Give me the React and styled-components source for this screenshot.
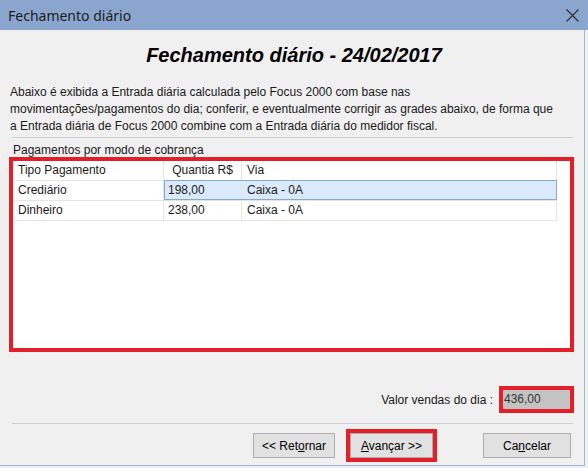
import React from 'react';
import styled, { createGlobalStyle } from 'styled-components';

const GlobalStyle = createGlobalStyle`
  html, body {
    margin: 0;
    padding: 0;
    background: #f0f0f0;
  }
  body {
    font-family: "Liberation Sans", Arial, sans-serif;
    font-size: 12px;
    color: #1a1a1a;
  }
`;

const Window = styled.div`
  width: 588px;
  height: 468px;
  box-sizing: border-box;
  display: flex;
  flex-direction: column;
  background: #f0f0f0;
`;

const TitleBar = styled.div`
  height: 30px;
  flex-shrink: 0;
  background: #8ba6ce;
  display: flex;
  align-items: center;
  justify-content: space-between;
  padding: 0 9px 0 8px;
`;

const TitleText = styled.span`
  font-family: "Noto Sans", "Open Sans", sans-serif;
  font-size: 14px;
  color: #1c1c1c;
`;

const CloseButton = styled.span`
  display: flex;
  width: 13px;
  height: 13px;
`;

const Body = styled.div`
  flex: 1;
  width: 585px;
  box-sizing: border-box;
  border-right: 1px solid #9fb4d6;
  border-bottom: 1px solid #9fb4d6;
  margin-bottom: 2px;
  display: flex;
  flex-direction: column;
`;

const Heading = styled.h1`
  margin: 13px 0 0;
  font-family: "Liberation Sans", Arial, sans-serif;
  font-size: 20px;
  line-height: 24px;
  font-weight: bold;
  font-style: italic;
  text-align: center;
  color: #000;
  padding-left: 4px;
`;

const Intro = styled.p`
  margin: 17px 0 0;
  padding: 0 8px 0 10px;
  line-height: 17px;
  color: #1a1a1a;
`;

const Separator = styled.div`
  height: 1px;
  background: #cfcfcf;
  margin: ${p => p.$top || 0}px 11px 0 12px;
`;

const SectionLabel = styled.div`
  margin: 5px 0 0 13px;
  line-height: 14px;
`;

const RedFrame = styled.div`
  border: 4px solid #e3202a;
  box-sizing: border-box;
  ${p => p.$block && 'margin: 0 10px 0 9px;'}
`;

const GridArea = styled.div`
  background: #fff;
  height: 187px;
  padding-left: 1px;
`;

const Row = styled.div`
  display: flex;
  width: 543px;
  height: 20px;
  box-sizing: border-box;
  border-bottom: 1px solid #e4e4e4;
`;

const Cell = styled.div`
  width: ${p => p.$w}px;
  flex-shrink: 0;
  box-sizing: border-box;
  padding: 0 ${p => p.$pad || 4}px;
  line-height: 19px;
  text-align: ${p => p.$align || 'left'};
  border-right: 1px solid #e4e4e4;
  white-space: nowrap;
  overflow: hidden;
`;

const Selection = styled.div`
  display: flex;
  background: #dbeafb;
  outline: 1px solid #86a8d3;
  outline-offset: -1px;
  margin-top: -1px;
  height: 20px;
  padding-top: 1px;
  box-sizing: border-box;
`;

const TotalRow = styled.div`
  display: flex;
  justify-content: flex-end;
  align-items: center;
  gap: 6px;
  margin: 34px 10px 0 0;
`;

const TotalValue = styled.div`
  width: 67px;
  height: 19px;
  background: #c3c3c3;
  color: #333;
  line-height: 19px;
  padding-left: 1px;
  box-sizing: border-box;
`;

const ButtonRow = styled.div`
  display: flex;
  align-items: center;
  margin: 5px 13px 0 253px;
  height: 33px;
`;

const Button = styled.button`
  font-family: "Liberation Sans", Arial, sans-serif;
  font-size: 12px;
  color: #000;
  width: ${p => p.$w}px;
  height: 25px;
  background: #e1e1e1;
  border: 1px solid #adadad;
  padding: 0;
  margin: 0;
  ${p => p.$push && 'margin-left: auto;'}
  u { text-decoration: underline; }
`;

const ButtonGap = styled.div`
  width: ${p => p.$w}px;
`;

const CloseIcon = () => (
  <svg width="13" height="13" viewBox="0 0 13 13">
    <path d="M0.5 0.5 L12.5 12.5 M12.5 0.5 L0.5 12.5" stroke="#2b2b2b" strokeWidth="1.1" fill="none" />
  </svg>
);

const columns = [
  { key: 'tipo', w: 150, pad: 4 },
  { key: 'qtd', w: 78, pad: 4 },
  { key: 'via', w: 315, pad: 5 },
];

const payments = [
  { tipo: 'Crediário', qtd: '198,00', via: 'Caixa - 0A', selected: true },
  { tipo: 'Dinheiro', qtd: '238,00', via: 'Caixa - 0A' },
];

export default function App() {
  return (
    <>
      <GlobalStyle />
      <Window>
        <TitleBar>
          <TitleText>Fechamento diário</TitleText>
          <CloseButton><CloseIcon /></CloseButton>
        </TitleBar>
        <Body>
          <Heading>Fechamento diário - 24/02/2017</Heading>
          <Intro>
            Abaixo é exibida a Entrada diária calculada pelo Focus 2000 com base nas<br />
            movimentações/pagamentos do dia; conferir, e eventualmente corrigir as grades abaixo, de forma que<br />
            a Entrada diária de Focus 2000 combine com a Entrada diária do medidor fiscal.
          </Intro>
          <Separator $top={2} />
          <SectionLabel>Pagamentos por modo de cobrança</SectionLabel>
          <RedFrame $block>
            <GridArea>
              <Row>
                <Cell $w={150} $pad={4}>Tipo Pagamento</Cell>
                <Cell $w={78} $align="center">Quantia R$</Cell>
                <Cell $w={315} $pad={5}>Via</Cell>
              </Row>
              {payments.map(p => (
                <Row key={p.tipo}>
                  <Cell $w={columns[0].w} $pad={4}>{p.tipo}</Cell>
                  {p.selected ? (
                    <Selection>
                      <Cell $w={columns[1].w}>{p.qtd}</Cell>
                      <Cell $w={columns[2].w} $pad={5}>{p.via}</Cell>
                    </Selection>
                  ) : (
                    <>
                      <Cell $w={columns[1].w}>{p.qtd}</Cell>
                      <Cell $w={columns[2].w} $pad={5}>{p.via}</Cell>
                    </>
                  )}
                </Row>
              ))}
            </GridArea>
          </RedFrame>
          <TotalRow>
            <span>Valor vendas do dia :</span>
            <RedFrame>
              <TotalValue>436,00</TotalValue>
            </RedFrame>
          </TotalRow>
          <Separator $top={10} />
          <ButtonRow>
            <Button $w={82}>&lt;&lt; Ret<u>o</u>rnar</Button>
            <ButtonGap $w={11} />
            <RedFrame>
              <Button $w={83}><u>A</u>vançar &gt;&gt;</Button>
            </RedFrame>
            <Button $w={88} $push>Ca<u>n</u>celar</Button>
          </ButtonRow>
        </Body>
      </Window>
    </>
  );
}
